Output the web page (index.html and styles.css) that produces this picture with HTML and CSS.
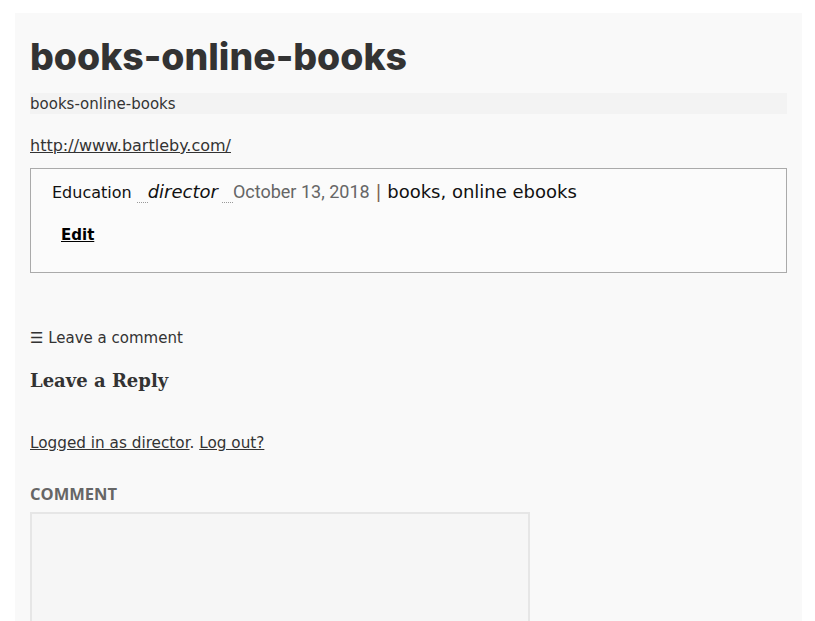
FILE: index.html
```html
<!DOCTYPE html>
<html>
<head>
<meta charset="utf-8">
<link rel="stylesheet" href="styles.css">
</head>
<body>
<div class="panel">
  <h1 class="title">books-online-books</h1>
  <p class="subtitle">books-online-books</p>
  <p class="url"><a href="#">http://www.bartleby.com/</a></p>
  <div class="meta-box">
    <div class="meta-line">
      <span class="cat">Education</span><abbr class="sp"> </abbr><span class="author">director</span><abbr class="sp sp2"> </abbr><span class="date">October 13, 2018</span> <span class="bar">|</span> <span class="tags">books, online ebooks</span>
    </div>
    <div class="edit"><a href="#">Edit</a></div>
  </div>
  <p class="leave">☰ Leave a comment</p>
  <h3 class="reply">Leave a Reply</h3>
  <p class="logged"><a href="#">Logged in as director</a>. <a href="#">Log out?</a></p>
  <label class="lbl">COMMENT</label>
  <div class="textarea"></div>
</div>
</body>
</html>
```
FILE: styles.css
```css
html, body { margin: 0; padding: 0; background: #ffffff; }
body { font-family: "DejaVu Sans", sans-serif; color: #333; height: 621px; overflow: hidden; }
.panel {
  margin: 13px 13px 0 15px;
  background: #f9f9f9;
  padding: 20px 15px 0 15px;
  height: 588px;
  overflow: hidden;
}
.title {
  font-family: "Inter", sans-serif;
  font-weight: 800;
  font-size: 37.4px;
  line-height: 48px;
  margin: 0 0 12px 0;
  color: #333;
}
.subtitle {
  margin: 0;
  background: #f3f3f3;
  font-size: 15px;
  line-height: 22px;
  height: 21px;
}
.url { margin: 20px 0 10px 0; font-size: 16px; line-height: 24px; }
.url a, .logged a { color: #333; text-decoration: underline; }
.meta-box {
  border: 1px solid #aaa;
  background: #fbfbfb;
  padding: 11px 0 0 21px;
  box-sizing: border-box;
  height: 105px;
}
.meta-line { font-size: 18px; line-height: 24px; color: #111; white-space: nowrap; }
.cat { font-size: 16px; color: #111; }
.sp { border-bottom: 1px dotted #999; display: inline-block; width: 11px; height: 14px; margin: 0 0 0 5px; vertical-align: -5px; }
.sp2 { margin-left: 4px; }
.author { font-style: italic; font-size: 18px; }
.date { font-family: "Roboto", sans-serif; color: #666; font-size: 18px; }
.bar { color: #7b6550; font-size: 18px; }
.tags { font-size: 18px; color: #111; }
.edit { margin: 21px 0 0 9px; font-size: 15px; font-weight: bold; }
.edit a { color: #000; }
.leave { margin: 55px 0 0 0; font-size: 15px; line-height: 20px; }
.reply { font-family: "DejaVu Serif", serif; font-weight: bold; font-size: 18px; margin: 20px 0 0 0; line-height: 26px; }
.logged { font-size: 15.25px; margin: 37px 0 0 0; line-height: 24px; }
.lbl { display: block; margin-top: 29px; font-family: "Open Sans", sans-serif; font-weight: 700; font-size: 16.5px; color: #666; line-height: 20px; }
.textarea { margin-top: 8px; width: 500px; height: 140px; border: 2px solid #e6e6e6; background: #f6f6f6; box-sizing: border-box; }
```
